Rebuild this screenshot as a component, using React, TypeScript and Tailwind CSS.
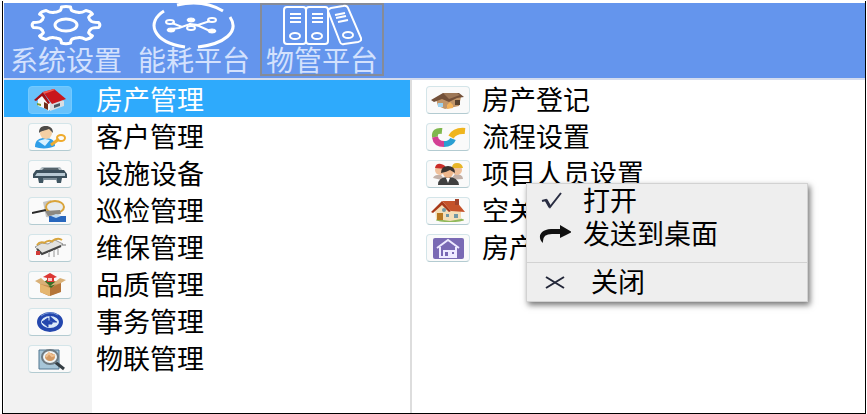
import React from "react";

const S = ({ children, className = "h-6 w-9" }: { children: React.ReactNode; className?: string }) => (
  <svg viewBox="0 0 36 24" className={className} aria-hidden="true">{children}</svg>
);

const RedHouse = () => (
  <S>
    <path d="M6 10 17 17 17 23 7 17z" fill="#f4f4f4" />
    <path d="M17 16 24 9 32 13 32 18 18 23z" fill="#d9dde2" />
    <path d="M6 11 10 7 18 15 18 22 6 18z" fill="#f7f7f5" />
    <path d="M2 12 11 4 18 15 16 16 10 8 4 13z" fill="#a40d12" />
    <path d="M11 4 22 1 34 11 20 16z" fill="#c9161c" />
    <path d="M11 4 22 1 23 2 12 6z" fill="#f05a50" />
    <path d="M12 14 16 16 16 22 12 20z" fill="#6d2d17" />
    <path d="M5 15 9 16 9 18 5 17z" fill="#7a9a34" />
    <path d="M22 17 28 15 28 18 22 20z" fill="#4b5661" />
  </S>
);
const Customer = () => (
  <S>
    <path d="M3 22c0-7 4-9 10-9s10 2 10 8c-5 3-15 3-20 1z" fill="#2f9ee8" />
    <path d="M6 16 13 14 18 15 13 21z" fill="#d9f1ff" />
    <ellipse cx="14" cy="8" rx="6" ry="6" fill="#f3cfa4" />
    <path d="M7 8C7 2 10 1 14 1s7 2 7 7l-4-4c-4 2-7 1-10 4z" fill="#4e4b48" />
    <path d="M19 20 27 14" stroke="#edac30" strokeWidth="3" />
    <ellipse cx="29" cy="13" rx="4" ry="3" fill="none" stroke="#efaa2b" strokeWidth="2" />
  </S>
);
const Device = () => (
  <S>
    <path d="M10 5h18l3 4H6z" fill="#b4bec4" />
    <path d="M12 6h14l1 2H10z" fill="#56636b" />
    <path d="M4 8h28l3 4v4H1v-4z" fill="#3c505c" />
    <path d="M5 11h28v3H3z" fill="#b8c9d3" />
    <path d="M6 16h6l-1 5H7zm18 0h6l-1 5h-4z" fill="#3f5561" />
    <path d="M11 17h14" stroke="#7a8b95" strokeWidth="2" />
  </S>
);
const Inspect = () => (
  <S>
    <path d="M11 3 19 1 21 19 14 18z" fill="#c4c4c4" />
    <path d="M0 14 14 11" fill="none" stroke="#292929" strokeWidth="2" />
    <ellipse cx="23" cy="8" rx="9" ry="6" fill="#e9edef" stroke="#d9a43b" strokeWidth="2" />
    <path d="M13 12 28 11 29 15 16 17z" fill="#8b8881" />
    <path d="M17 17h17v6H17z" fill="#2867bd" />
    <path d="M19 17 24 15 29 17 24 19z" fill="#bddaf2" />
  </S>
);
const Repair = () => (
  <S>
    <path d="M3 11 10 7 16 8 23 4 31 8 24 13 10 18z" fill="#e2e2df" stroke="#999" />
    <path d="M5 9Q8 5 13 7M12 7Q17 3 21 6M20 5Q26 1 30 4" fill="none" stroke="#d7a43c" strokeWidth="2" />
    <path d="M5 13 10 18 29 10" fill="none" stroke="#454545" strokeWidth="2" />
    <path d="M17 16v5M22 14v7M26 13v6" stroke="#c8c8c8" strokeWidth="2" />
    <path d="M4 15h4v4H4z" fill="#d23c38" />
    <path d="M30 9h4" stroke="#777" />
  </S>
);
const Box = () => (
  <S>
    <path d="M8 11 17 6 29 10 28 19 17 23 8 19z" fill="#c99152" />
    <path d="M8 11 18 15V23L8 19z" fill="#e5b66f" />
    <path d="M18 15 29 10V19L18 23z" fill="#b57539" />
    <path d="M12 9 17 6 25 10 19 15z" fill="#386d27" />
    <path d="M8 11 3 8 9 5 18 13zM29 10 34 7 28 5 18 13z" fill="#d9b077" />
    <path d="M18 0 25 4 22 5v4h-7V5l-4-1z" fill="#dc3734" />
    <path d="M16 5h4v3h-4z" fill="#f7c8c4" />
  </S>
);
const Affairs = () => (
  <S>
    <ellipse cx="18" cy="12" rx="11" ry="8" fill="#dceaf9" stroke="#2447ae" strokeWidth="4" />
    <path d="M18 6v6h7M10 12l6-4v3h4v3h-4v3z" fill="#2447ae" stroke="#2447ae" />
    <path d="M9 6Q17 0 26 5" fill="none" stroke="#7899d8" strokeWidth="1" />
  </S>
);
const Network = () => (
  <S>
    <path d="M7 3h20v19H7z" fill="#a7c6d8" stroke="#527790" strokeWidth="1" />
    <path d="M23 15 32 22" stroke="#343d43" strokeWidth="3" />
    <ellipse cx="18" cy="10" rx="8" ry="7" fill="#eff4f5" stroke="#6d7a82" strokeWidth="2" />
    <ellipse cx="18" cy="10" rx="5" ry="4" fill="#d39a64" />
    <path d="m14 10 3-4 3 3 3-1" fill="none" stroke="#efc192" strokeWidth="2" />
  </S>
);
const BrownHouse = () => (
  <S>
    <path d="M6 11 16 7 31 9 29 18 15 21 8 18z" fill="#c09468" />
    <path d="M1 12 13 5 29 5 34 9 27 10 19 14 12 11 4 14z" fill="#735039" />
    <path d="M13 5 27 5 30 7 19 11z" fill="#9d7757" />
    <path d="M8 15h5v4H8z" fill="#9fd2ee" />
    <path d="M17 17 20 14 23 17v3l-6 1z" fill="#f2b25a" />
    <path d="M25 12h5v5h-5z" fill="#59422f" />
  </S>
);
const Flow = () => (
  <S>
    <path d="M5 12Q4 5 12 6" fill="none" stroke="#7fb74e" strokeWidth="6" />
    <path d="M5 12Q6 19 14 19" fill="none" stroke="#d33f94" strokeWidth="6" />
    <path d="M14 19Q21 19 23 14" fill="none" stroke="#2a9fd2" strokeWidth="6" />
    <path d="M21 12Q25 5 35 6" fill="none" stroke="#efb51e" strokeWidth="6" />
  </S>
);
const People = () => (
  <S>
    <path d="M3 16Q5 12 11 13l5 6zM20 18l5-6q8 0 8 5z" fill="#c3b1a8" />
    <circle cx="10" cy="8" r="5" fill="#efc09b" />
    <circle cx="27" cy="8" r="5" fill="#efc09b" />
    <path d="M5 6Q6 1 11 2t5 5z" fill="#c92c28" />
    <path d="M22 6q0-5 5-5t6 5z" fill="#e8b628" />
    <path d="M8 23q0-8 10-8t11 8z" fill="#404040" />
    <circle cx="18" cy="11" r="5" fill="#efb78c" />
    <path d="M11 11q0-7 7-7t7 7l-5-3q-3 2-9 3z" fill="#3b3430" />
    <path d="m16 16 2 5 2-5z" fill="#fff" />
  </S>
);
const OrangeHouse = () => (
  <S>
    <ellipse cx="20" cy="21" rx="14" ry="2" fill="#91b95b" />
    <path d="M5 11 13 5 20 9 31 11 31 20 20 22 6 20z" fill="#f4dfb8" />
    <path d="M1 13 12 2 21 12 19 13 12 6 3 14z" fill="#a83818" />
    <path d="M12 2 26 2 35 13 21 12z" fill="#c5532b" />
    <path d="M25 0h4v6h-4z" fill="#a2432b" />
    <path d="M7 14h6v7H7z" fill="#b9781f" />
    <circle cx="14" cy="11" r="2" fill="#7198a5" />
    <path d="M16 15h3v3h-3zm8 0h4v4h-4z" fill="#7198a5" />
  </S>
);
const PurpleHouse = () => (
  <S>
    <rect x="3" y="2" width="31" height="21" rx="2" fill="#7a6ab4" />
    <path d="m7 12 11-8 11 8M10 11v10h16V11" fill="none" stroke="#eeeaff" strokeWidth="2" />
    <path d="M14 21v-6h5v6m2-6h4v4h-4z" fill="none" stroke="#eeeaff" strokeWidth="2" />
  </S>
);

const modules = [
  ["房产管理", RedHouse], ["客户管理", Customer], ["设施设备", Device], ["巡检管理", Inspect],
  ["维保管理", Repair], ["品质管理", Box], ["事务管理", Affairs], ["物联管理", Network],
] as const;
const pages = [
  ["房产登记", BrownHouse], ["流程设置", Flow], ["项目人员设置", People],
  ["空关房产", OrangeHouse], ["房产查询", PurpleHouse],
] as const;

const Tile = ({ children, active = false }: { children: React.ReactNode; active?: boolean }) => (
  <span className={`flex h-7 w-11 shrink-0 items-center justify-center rounded border ${active ? "border-[#73caff] bg-[#69c2fb]" : "border-[#d4e5e9] border-b-[#b3cbd1] bg-[#fafafa]"}`}>{children}</span>
);

// Eight-toothed outline: each tooth has a flat tip and a rounded valley after it.
const polar = (r: number, deg: number) => {
  const a = (deg * Math.PI) / 180;
  return `${(36 + r * Math.sin(a)).toFixed(1)} ${(21 - r * 0.55 * Math.cos(a)).toFixed(1)}`;
};
const gearPath =
  Array.from({ length: 8 }, (_, k) => {
    const a = k * 45;
    return `${k === 0 ? "M" : "L"}${polar(33, a - 8)}Q${polar(35, a)} ${polar(33, a + 8)}Q${polar(26, a + 10)} ${polar(26, a + 18)}Q${polar(25, a + 23)} ${polar(26, a + 27)}Q${polar(26, a + 35)} ${polar(33, a + 37)}`;
  }).join("") + "Z";

const Gear = () => (
  <svg viewBox="0 0 72 42" className="h-[42px] w-[72px]" fill="none" stroke="white" strokeWidth="3" strokeLinejoin="round" aria-hidden="true">
    <path d={gearPath} />
    <ellipse cx="36" cy="21" rx="11" ry="6" />
  </svg>
);
const Energy = () => (
  <svg viewBox="0 0 84 50" className="h-[50px] w-[84px] shrink-0" fill="none" stroke="white" strokeWidth="3" aria-hidden="true">
    <path d="M12 11C-6 22 0 42 33 47M25 5Q51-1 71 11M78 17C88 32 72 44 46 47" />
    <path d="m20 29 7 -1 11-4 9 2 11 5M20 23l10 4 8-3 8 1 12-4" strokeWidth="2" />
    <ellipse cx="18" cy="22" rx="4" ry="2" strokeWidth="2" />
    <ellipse cx="60" cy="20" rx="4" ry="2" strokeWidth="2" />
    <ellipse cx="19" cy="30" rx="4" ry="2" fill="white" strokeWidth="1" />
    <ellipse cx="39" cy="20" rx="4" ry="2" fill="white" strokeWidth="1" />
    <ellipse cx="39" cy="28" rx="4" ry="2" strokeWidth="2" />
    <ellipse cx="60" cy="31" rx="4" ry="2" fill="white" strokeWidth="1" />
  </svg>
);
const Binders = () => (
  <svg viewBox="0 0 80 42" className="h-[42px] w-[80px]" fill="none" stroke="white" strokeWidth="2" aria-hidden="true">
    <rect x="2" y="3" width="22" height="37" rx="3" />
    <rect x="24" y="3" width="22" height="37" rx="3" />
    <path d="m49 4 12-2q4-1 5 2l13 30q1 3-3 4l-14 2q-3 1-4-2L46 7q0-2 3-3z" />
    <path d="M8 10h11M8 14h11M8 18h11M30 10h11M30 14h11M30 18h11M53 11l10-2M54 14l10-2M56 18l10-2" />
    <ellipse cx="13" cy="32" rx="5" ry="3" />
    <ellipse cx="35" cy="32" rx="5" ry="3" />
    <ellipse cx="66" cy="31" rx="5" ry="3" />
  </svg>
);

const tabs = [["系统设置", Gear], ["能耗平台", Energy], ["物管平台", Binders]] as const;
const rowText = "pt-0.5 text-[27px] leading-9 whitespace-nowrap";

export default function App() {
  return (
    <div className="min-h-screen bg-white pt-px pr-px pl-0.5 font-['Liberation_Sans','Noto_Sans_CJK_SC',sans-serif] text-black">
      <div className="flex min-h-[calc(100vh-1px)] flex-col border-x border-b border-black pt-0.5 pl-px">
        <header className="flex h-[77px] shrink-0 gap-1 border-b-2 border-[#d3dcef] bg-[#6495ed]">
          {tabs.map(([label, Icon], i) => (
            <button key={label} type="button" className={`flex h-[73px] w-[124px] flex-col items-center border-2 ${i === 2 ? "border-[#858b98]" : "border-transparent"}`}>
              <span className="flex h-10 shrink-0 items-center"><Icon /></span>
              <span className="text-[28px] leading-[34px] whitespace-nowrap text-[#d3e1fd]">{label}</span>
            </button>
          ))}
        </header>
        <main className="flex grow">
          <nav className="w-[47.4%] border-r-2 border-[#dddddd] bg-[linear-gradient(to_right,#f2f2f2_88px,white_88px)]">
            {modules.map(([label, Icon], i) => (
              <button key={label} type="button" className={`flex h-[37px] w-full items-center gap-6 pt-0.5 pl-6 ${i === 0 ? "bg-[#2eaafc] text-white" : ""}`}>
                <Tile active={i === 0}><Icon /></Tile>
                <span className={rowText}>{label}</span>
              </button>
            ))}
          </nav>
          <section className="grow">
            {pages.map(([label, Icon], i) => (
              <div key={label} className="relative">
                <button type="button" className="flex h-[37px] w-full items-center gap-3 pt-0.5 pl-3.5">
                  <Tile><Icon /></Tile>
                  <span className={rowText}>{label}</span>
                </button>
                {i === 2 && (
                  <div role="menu" className="absolute top-[29px] left-[114px] z-10 w-[282px] border border-[#d2d2d2] bg-[#eeeeee] shadow-[2px_3px_6px_#0000008c]">
                    <button type="button" role="menuitem" className="flex h-[33px] w-full items-center gap-3 pl-2.5">
                      <svg viewBox="0 0 34 24" className="h-6 w-[34px]" fill="none" stroke="#292d42" strokeWidth="2" aria-hidden="true">
                        <path d="m5 12 4-1 4 7L24 4" />
                        <path d="m9 11 4 7" strokeWidth="3" />
                      </svg>
                      <span className={rowText}>打开</span>
                    </button>
                    <button type="button" role="menuitem" className="flex h-[33px] w-full items-center gap-3 pl-2.5">
                      <svg viewBox="0 0 34 24" className="h-6 w-[34px]" aria-hidden="true"><path d="M6 21C1 17 1 8 14 7H23V3L35 10 23 16V12H15Q5 12 6 21Z" fill="#111" /></svg>
                      <span className={rowText}>发送到桌面</span>
                    </button>
                    <div className="mt-3 h-px bg-[#d2d2d2]" />
                    <button type="button" role="menuitem" className="flex h-[38px] w-full items-center gap-5 pl-2.5">
                      <svg viewBox="0 0 34 24" className="h-6 w-[34px]" fill="none" stroke="#222638" strokeWidth="2" aria-hidden="true"><path d="m9 7 18 11M27 7 9 18" /></svg>
                      <span className={rowText}>关闭</span>
                    </button>
                  </div>
                )}
              </div>
            ))}
          </section>
        </main>
      </div>
    </div>
  );
}
